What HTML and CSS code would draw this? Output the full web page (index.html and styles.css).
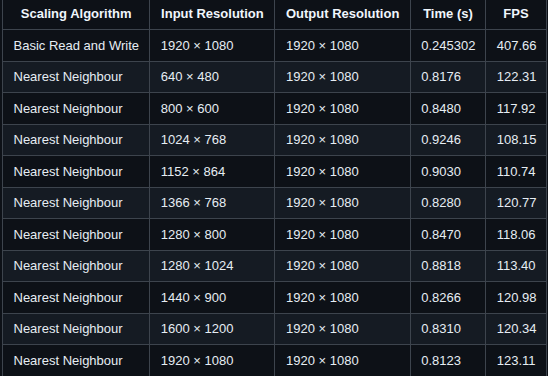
FILE: index.html
```html
<!DOCTYPE html>
<html lang="en">
<head>
<meta charset="utf-8">
<title>Scaling benchmark</title>
<link rel="stylesheet" href="styles.css">
</head>
<body>
<div class="wrap">
<table class="bench">
  <colgroup>
    <col class="c-alg">
    <col class="c-in">
    <col class="c-out">
    <col class="c-time">
    <col class="c-fps">
  </colgroup>
  <thead>
    <tr><th>Scaling Algorithm</th><th>Input Resolution</th><th>Output Resolution</th><th>Time (s)</th><th>FPS</th></tr>
  </thead>
  <tbody>
    <tr><td>Basic Read and Write</td><td>1920 × 1080</td><td>1920 × 1080</td><td>0.245302</td><td>407.66</td></tr>
    <tr><td>Nearest Neighbour</td><td>640 × 480</td><td>1920 × 1080</td><td>0.8176</td><td>122.31</td></tr>
    <tr><td>Nearest Neighbour</td><td>800 × 600</td><td>1920 × 1080</td><td>0.8480</td><td>117.92</td></tr>
    <tr><td>Nearest Neighbour</td><td>1024 × 768</td><td>1920 × 1080</td><td>0.9246</td><td>108.15</td></tr>
    <tr><td>Nearest Neighbour</td><td>1152 × 864</td><td>1920 × 1080</td><td>0.9030</td><td>110.74</td></tr>
    <tr><td>Nearest Neighbour</td><td>1366 × 768</td><td>1920 × 1080</td><td>0.8280</td><td>120.77</td></tr>
    <tr><td>Nearest Neighbour</td><td>1280 × 800</td><td>1920 × 1080</td><td>0.8470</td><td>118.06</td></tr>
    <tr><td>Nearest Neighbour</td><td>1280 × 1024</td><td>1920 × 1080</td><td>0.8818</td><td>113.40</td></tr>
    <tr><td>Nearest Neighbour</td><td>1440 × 900</td><td>1920 × 1080</td><td>0.8266</td><td>120.98</td></tr>
    <tr><td>Nearest Neighbour</td><td>1600 × 1200</td><td>1920 × 1080</td><td>0.8310</td><td>120.34</td></tr>
    <tr><td>Nearest Neighbour</td><td>1920 × 1080</td><td>1920 × 1080</td><td>0.8123</td><td>123.11</td></tr>
  </tbody>
</table>
</div>
</body>
</html>
```
FILE: styles.css
```css
html, body {
  margin: 0;
  padding: 0;
  background: #0d1117;
  overflow: hidden;
}
.wrap {
  padding-left: 2px;
  margin-top: -2.2px;
}
.bench {
  border-collapse: collapse;
  table-layout: fixed;
  width: 544.7px;
  font-family: "Liberation Sans", Arial, sans-serif;
  font-size: 13px;
  line-height: 19.5px;
  color: #e6edf3;
}
.c-alg { width: 147.3px; }
.c-in { width: 125.2px; }
.c-out { width: 135.2px; }
.c-time { width: 75.6px; }
.c-fps { width: 60.4px; }
.bench th,
.bench td {
  border: 1px solid #3d444d;
  padding: 5.5px 10.5px;
  white-space: nowrap;
}
.bench th {
  font-weight: 700;
  text-align: center;
  color: #f0f6fc;
}
.bench td {
  text-align: left;
}
.bench tbody tr {
  background: #0d1117;
}
.bench tbody tr:nth-child(2n) {
  background: #151b23;
}
```
